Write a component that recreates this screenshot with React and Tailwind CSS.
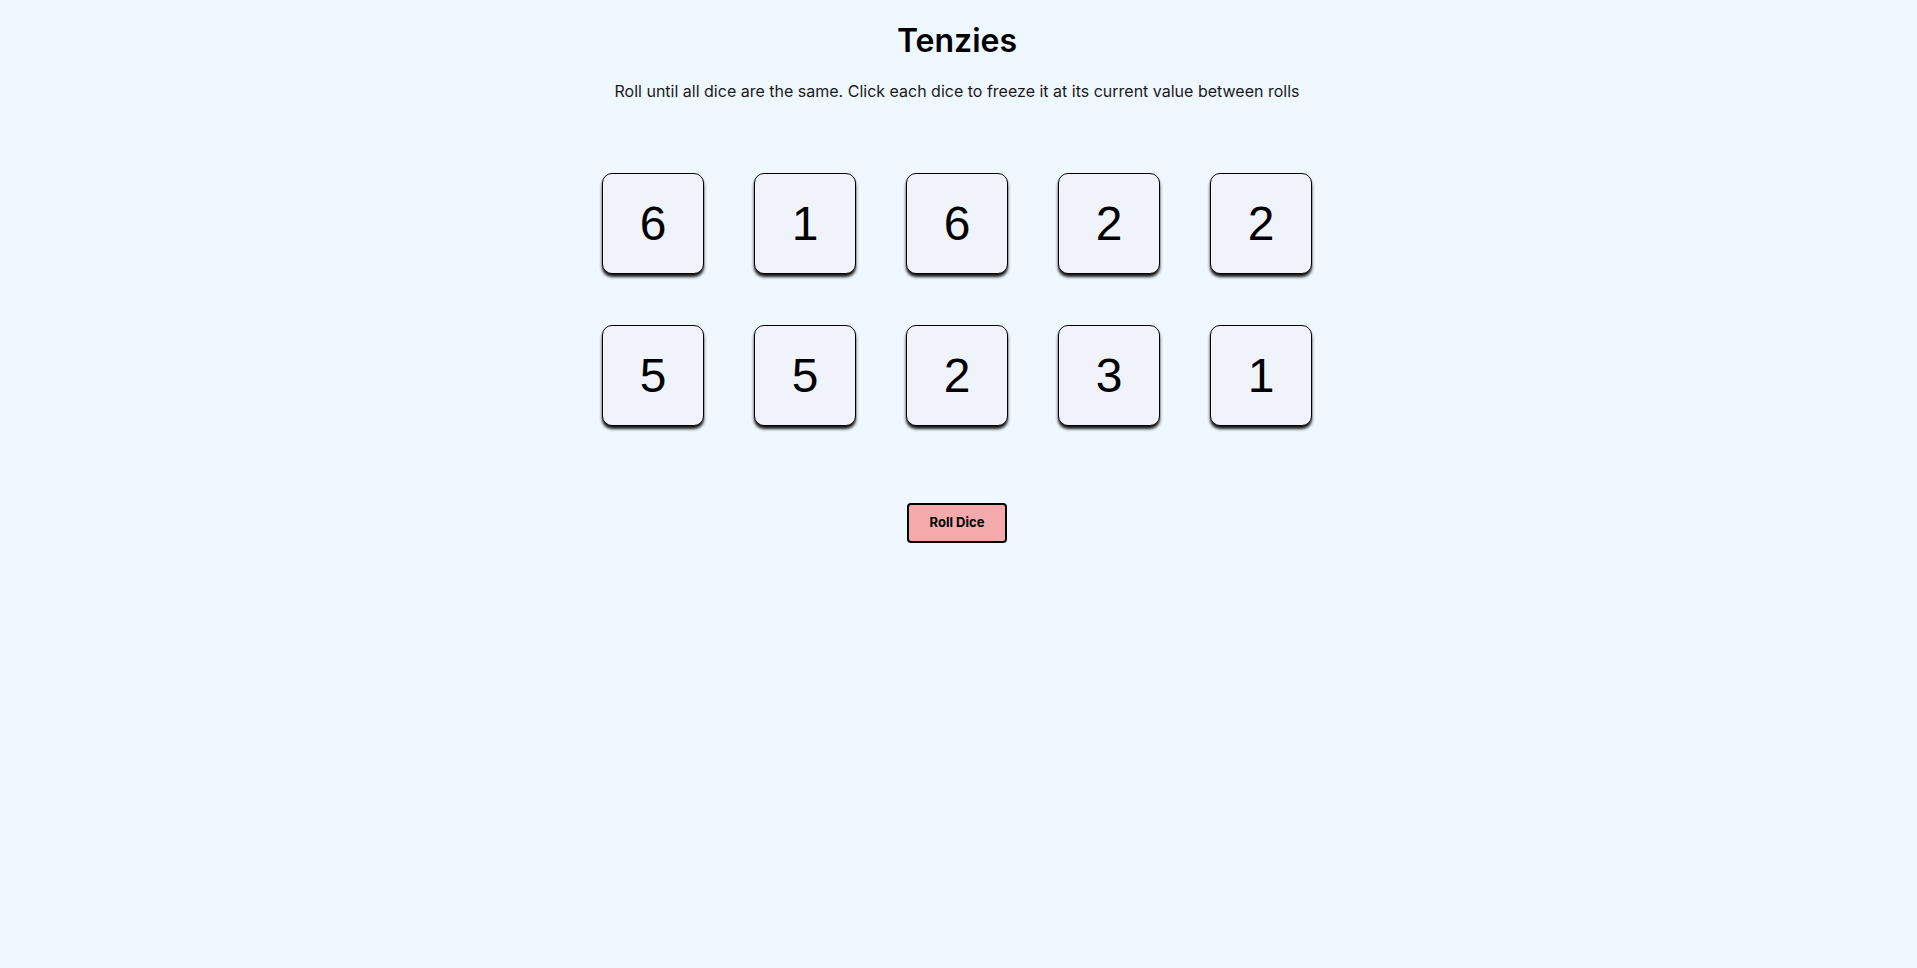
import { useState } from 'react';

const INITIAL = [6, 1, 6, 2, 2, 5, 5, 2, 3, 1];

function Die({ value }) {
  return (
    <button
      type="button"
      className="flex h-[101px] w-[102px] items-center justify-center rounded-[10px] border border-black bg-[#f0f4fa] text-[48px] text-black shadow-[0_3px_3px_rgba(0,0,0,0.9)]"
      style={{ fontFamily: '"Liberation Sans", Arial, sans-serif' }}
    >
      {value}
    </button>
  );
}

export default function App() {
  const [dice] = useState(INITIAL);

  return (
    <main
      className="flex min-h-[968px] flex-col items-center bg-[#eff7ff] pr-[3px] text-black"
      style={{ fontFamily: 'Inter, "Noto Sans", sans-serif' }}
    >
      <h1 className="mt-[21px] text-[32px] font-semibold leading-[39px]">Tenzies</h1>
      <p className="mt-[21px] text-base leading-[20px] text-[#1a1a1a]">
        Roll until all dice are the same. Click each dice to freeze it at its current value between rolls
      </p>
      <div className="mt-[72px] grid grid-cols-5 gap-x-[50px] gap-y-[51px]">
        {dice.map((d, i) => (
          <Die key={i} value={d} />
        ))}
      </div>
      <button
        type="button"
        className="mt-[77px] h-[40px] w-[100px] rounded-[4px] border-2 border-black bg-[#f4a9ab] text-[13px] font-bold text-black"
      >
        Roll Dice
      </button>
    </main>
  );
}
